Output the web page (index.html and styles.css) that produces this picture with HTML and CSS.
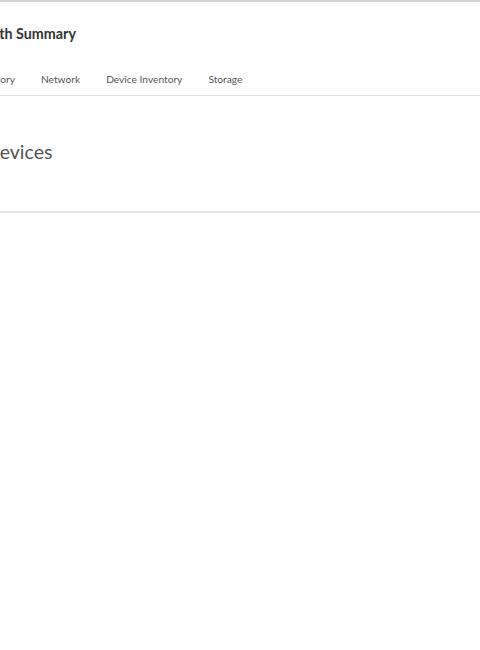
FILE: index.html
```html
<!DOCTYPE html>
<html>
<head>
<meta charset="utf-8">
<link rel="stylesheet" href="styles.css">
</head>
<body>
<div class="page">
  <header class="header">
    <h1 class="title">Health Summary</h1>
    <nav class="tabs">
      <span class="tab">History</span>
      <span class="tab">Network</span>
      <span class="tab">Device Inventory</span>
      <span class="tab">Storage</span>
    </nav>
  </header>
  <section class="section">
    <h2 class="section-title">Devices</h2>
  </section>
</div>
</body>
</html>
```
FILE: styles.css
```css
html, body {
  margin: 0;
  padding: 0;
  background: #ffffff;
  overflow: hidden;
}
body {
  font-family: Lato, "Liberation Sans", sans-serif;
  border-top: 2px solid #d4d4d4;
  height: 650px;
  box-sizing: border-box;
}
.page {
  margin-left: -30px;
}
.header {
  border-bottom: 1px solid #e0e0e0;
}
.title {
  margin: 0;
  padding-top: 23px;
  font-size: 14.3px;
  font-weight: 700;
  color: #333333;
  line-height: 18px;
  height: 18px;
}
.tabs {
  display: flex;
  gap: 26px;
  margin-top: 29px;
  margin-left: 12px;
  height: 23px;
  font-size: 10.2px;
  color: #555555;
  line-height: 14px;
}
.section {
  border-bottom: 2px solid #e6e6e6;
  height: 117px;
  box-sizing: border-box;
  margin-left: 15px;
  margin-right: -40px;
}
.section-title {
  margin: 0;
  padding-top: 43px;
  font-size: 19.5px;
  font-weight: 400;
  color: #555555;
  line-height: 26px;
}
```
